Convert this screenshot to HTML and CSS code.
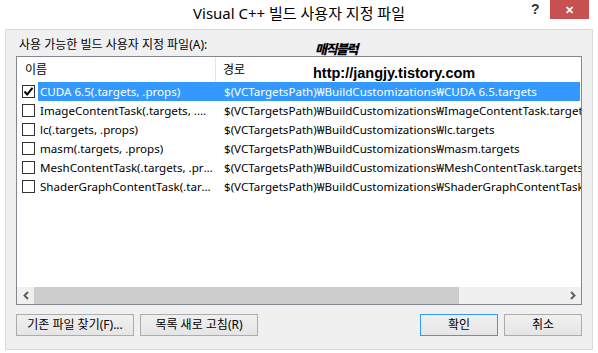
FILE: index.html
```html
<!DOCTYPE html>
<html lang="ko">
<head>
<meta charset="utf-8">
<link rel="stylesheet" href="styles.css">
</head>
<body>
<div class="window">
  <div class="titlebar">
    <div class="title">Visual C++ 빌드 사용자 지정 파일</div>
    <div class="help">?</div>
    <div class="close">✕</div>
  </div>
  <div class="panel">
    <div class="label">사용 가능한 빌드 사용자 지정 파일(A):</div>
    <div class="listbox">
      <div class="header">
        <div class="hcell hname">이름</div>
        <div class="hcell hpath">경로</div>
      </div>
      <div class="rows">
        <div class="row selected">
          <span class="check checked"><svg width="11" height="11" viewBox="0 0 11 11"><path d="M1.5 5.5 L4.2 8.5 L9.5 1.8" fill="none" stroke="#000" stroke-width="2"/></svg></span>
          <span class="name">CUDA 6.5(.targets, .props)</span>
          <span class="path">$(VCTargetsPath)₩BuildCustomizations₩CUDA 6.5.targets</span>
        </div>
        <div class="row">
          <span class="check"></span>
          <span class="name">ImageContentTask(.targets, .props)</span>
          <span class="path">$(VCTargetsPath)₩BuildCustomizations₩ImageContentTask.targets</span>
        </div>
        <div class="row">
          <span class="check"></span>
          <span class="name">lc(.targets, .props)</span>
          <span class="path">$(VCTargetsPath)₩BuildCustomizations₩lc.targets</span>
        </div>
        <div class="row">
          <span class="check"></span>
          <span class="name">masm(.targets, .props)</span>
          <span class="path">$(VCTargetsPath)₩BuildCustomizations₩masm.targets</span>
        </div>
        <div class="row">
          <span class="check"></span>
          <span class="name">MeshContentTask(.targets, .props)</span>
          <span class="path">$(VCTargetsPath)₩BuildCustomizations₩MeshContentTask.targets</span>
        </div>
        <div class="row">
          <span class="check"></span>
          <span class="name">ShaderGraphContentTask(.targets, .props)</span>
          <span class="path">$(VCTargetsPath)₩BuildCustomizations₩ShaderGraphContentTask.targets</span>
        </div>
      </div>
      <div class="spacer"></div>
      <div class="hscroll">
        <div class="arrow"><svg width="8" height="9" viewBox="0 0 8 9"><path d="M6 1 L2.5 4.5 L6 8" fill="none" stroke="#606060" stroke-width="2"/></svg></div>
        <div class="track"><div class="thumb"></div></div>
        <div class="arrow"><svg width="8" height="9" viewBox="0 0 8 9"><path d="M2 1 L5.5 4.5 L2 8" fill="none" stroke="#606060" stroke-width="2"/></svg></div>
      </div>
    </div>
    <div class="buttons">
      <div class="btn">기존 파일 찾기(F)...</div>
      <div class="btn">목록 새로 고침(R)</div>
      <div class="grow"></div>
      <div class="btn small default">확인</div>
      <div class="btn small">취소</div>
    </div>
  </div>
  <div class="watermark">
    <div class="wm1">매직블럭</div>
    <div class="wm2">http://jangjy.tistory.com</div>
  </div>
</div>
</body>
</html>
```
FILE: styles.css
```css
* { box-sizing: border-box; }
html, body { margin: 0; padding: 0; background: #fff; }
body {
  width: 598px;
  height: 353px;
  overflow: hidden;
  font-family: "Noto Sans", "Noto Sans CJK KR", sans-serif;
  font-size: 12px;
  color: #000;
}
.window { position: relative; width: 598px; height: 353px; }
.titlebar {
  height: 29px;
  display: flex;
  align-items: flex-start;
  position: relative;
}
.title {
  flex: 1;
  text-align: center;
  font-size: 15px;
  line-height: 26px;
  color: #000;
}
.help {
  position: absolute;
  left: 531px;
  top: 1px;
  font-family: "Liberation Sans", sans-serif;
  font-weight: bold;
  font-size: 14px;
  color: #333;
}
.close {
  position: absolute;
  left: 550px;
  top: 0;
  width: 39px;
  height: 19px;
  background: #c75050;
  color: #fff;
  font-size: 11px;
  font-weight: bold;
  text-align: center;
  line-height: 19px;
}
.panel {
  margin: 0 5px 0 5px;
  height: 321px;
  border: 1px solid #dadada;
  background: #f0f0f0;
  padding: 7px 10px 0 10px;
  display: flex;
  flex-direction: column;
}
.label {
  line-height: 16px;
  height: 16px;
  padding-left: 3px;
  margin-bottom: 3px;
}
.listbox {
  height: 249px;
  border: 1px solid #828790;
  background: #fff;
  display: flex;
  flex-direction: column;
  overflow: hidden;
}
.header {
  height: 25px;
  display: flex;
  flex-shrink: 0;
}
.hcell { line-height: 26px; }
.hname {
  width: 199px;
  padding-left: 8px;
  border-right: 1px solid #e5e5e5;
}
.hpath { padding-left: 7px; }
.rows { display: flex; flex-direction: column; font-size: 11.6px; }
.row {
  height: 19px;
  display: flex;
  align-items: center;
  white-space: nowrap;
}
.check {
  width: 13px;
  height: 13px;
  border: 1px solid #333;
  background: #fff;
  margin: 0 3px 0 5px;
  flex-shrink: 0;
  display: flex;
  align-items: center;
  justify-content: center;
}
.name {
  width: 178px;
  padding-left: 2px;
  overflow: hidden;
  text-overflow: ellipsis;
  flex-shrink: 0;
  line-height: 19px;
  padding-right: 3px;
}
.path {
  padding-left: 8px;
  line-height: 19px;
  flex-shrink: 0;
}
.row.selected .name,
.row.selected .path {
  background: #3399ff;
  color: #fff;
}
.row.selected .path { width: 364px; }
.spacer { flex: 1; }
.hscroll {
  height: 17px;
  display: flex;
  background: #f0f0f0;
  flex-shrink: 0;
}
.arrow {
  width: 17px;
  display: flex;
  align-items: center;
  justify-content: center;
}
.track { flex: 1; display: flex; }
.thumb { width: 425px; background: #cdcdcd; }
.buttons {
  display: flex;
  margin-top: 9px;
  gap: 6px;
}
.grow { flex: 1; }
.btn {
  width: 118px;
  height: 22px;
  border: 1px solid #acacac;
  background: linear-gradient(#f0f0f0, #e5e5e5);
  text-align: center;
  line-height: 20px;
  font-size: 12px;
}
.btn.small { width: 78px; }
.btn.default { border-color: #3399ff; }
.watermark {
  position: absolute;
  left: 313px;
  top: 41px;
}
.wm1 {
  font-family: "Noto Sans CJK KR", sans-serif;
  font-weight: 900;
  font-size: 13px;
  line-height: 16px;
  font-style: italic;
  letter-spacing: -1.5px;
  padding-left: 2px;
}
.wm2 {
  font-family: "Liberation Sans", sans-serif;
  font-weight: bold;
  font-size: 14.5px;
  line-height: 16px;
  margin-top: 8px;
}
```
